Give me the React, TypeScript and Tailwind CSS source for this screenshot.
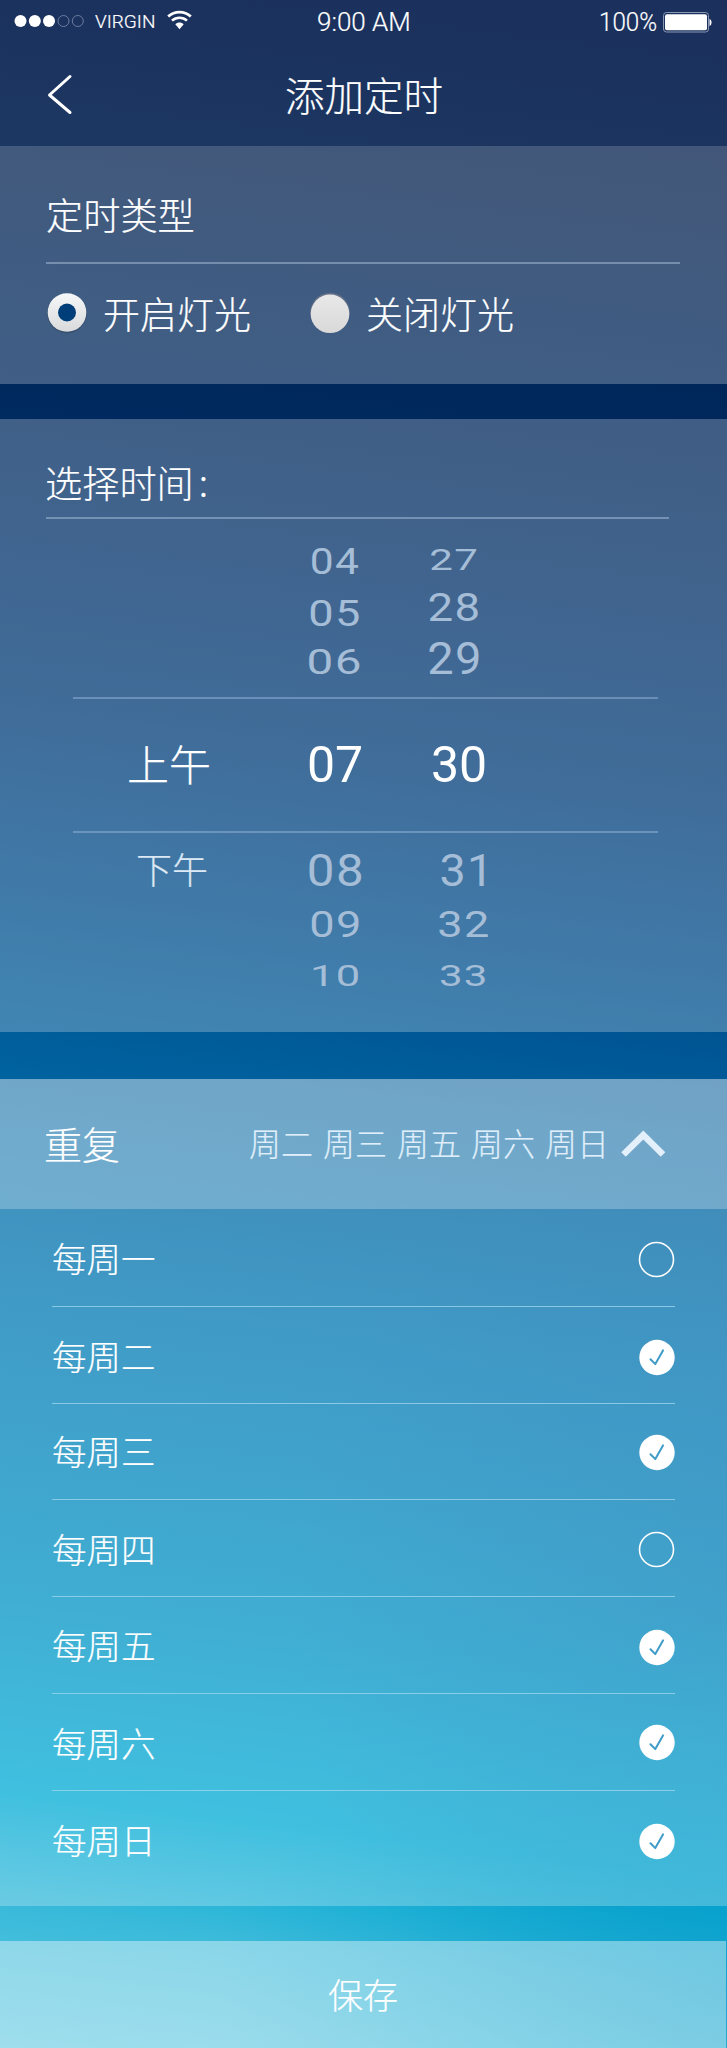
import React, { useState } from "react";

const cjk =
  "font-['Noto_Sans_CJK_SC',sans-serif] font-light whitespace-nowrap [-webkit-text-stroke:0.2px_currentColor]";
const latin = "font-[Roboto,sans-serif] whitespace-nowrap";

type Cell = { text: string; box: string; type: string };

const hoursBefore: Cell[] = [
  { text: "04", box: "h-[52px]", type: "text-[37px] scale-x-[1.15]" },
  { text: "05", box: "h-[52px]", type: "text-[37px] scale-x-[1.22]" },
  { text: "06", box: "h-[46px]", type: "text-[35px] scale-x-[1.36]" },
];
const minutesBefore: Cell[] = [
  { text: "27", box: "h-[44px]", type: "text-[29px] scale-x-[1.45]" },
  { text: "28", box: "h-[51px]", type: "text-[38px] scale-x-[1.2]" },
  { text: "29", box: "h-[52px]", type: "text-[44px] scale-x-[1.07]" },
];
const hoursAfter: Cell[] = [
  { text: "08", box: "h-[54px]", type: "text-[44px] scale-x-[1.12]" },
  { text: "09", box: "h-[53px]", type: "text-[37px] scale-x-[1.22]" },
  { text: "10", box: "h-[49px]", type: "text-[30px] scale-x-[1.45]" },
];
const minutesAfter: Cell[] = [
  { text: "31", box: "h-[54px] pl-[6px]", type: "text-[44px] scale-x-[1.06]" },
  { text: "32", box: "h-[53px]", type: "text-[37px] scale-x-[1.22]" },
  { text: "33", box: "h-[49px]", type: "text-[30px] scale-x-[1.4]" },
];

function Wheel({ cells, className }: { cells: Cell[]; className: string }) {
  return (
    <div className={`flex flex-col text-[#a5bdd6] ${className}`}>
      {cells.map((c) => (
        <div key={c.text} className={`flex items-center justify-center ${c.box}`}>
          <span className={`${latin} -mr-[0.03em] tracking-[0.03em] leading-none ${c.type}`}>{c.text}</span>
        </div>
      ))}
    </div>
  );
}

function StatusBar() {
  return (
    <div className="flex h-[44px] items-start">
      <svg className="mt-[14px] ml-[14px] h-[14px] w-[72px]" viewBox="0 0 72 14">
        <circle cx="6.5" cy="7" r="6" fill="#fff" />
        <circle cx="20.8" cy="7" r="6" fill="#fff" />
        <circle cx="35" cy="7" r="6" fill="#fff" />
        <circle cx="49.5" cy="7" r="5.5" fill="none" stroke="#7483a3" strokeWidth="0.9" />
        <circle cx="63.8" cy="7" r="5.5" fill="none" stroke="#7483a3" strokeWidth="0.9" />
      </svg>
      <div className="mt-[12px] ml-[9px] w-[72px]">
        <span className={`${latin} block origin-left text-[19px] leading-[20px] font-light [-webkit-text-stroke:0.2px_currentColor]`}>VIRGIN</span>
      </div>
      <svg className="mt-[10px] h-[20px] w-[25px]" viewBox="0 0 25 20" fill="none" stroke="#fff">
        <path d="M1.2 6.6C7.6.5 17.4.5 23.8 6.6" strokeWidth="2.8" />
        <path d="M5 10.7c4.300-4 10.700-4 15 0" strokeWidth="2.500" />
        <path d="M8.300 14.300C10.500 11.900 14.500 11.900 16.700 14.300L12.500 19.300Z" fill="#fff" stroke="none" />
      </svg>
      <div className="mt-[8px] ml-[125px] w-[282px]">
        <span className={`${latin} block origin-left text-[26px] font-light leading-[28px] [-webkit-text-stroke:0.2px_currentColor]`}>9:00 AM</span>
      </div>
      <div className="mt-[8px] w-[64px]">
        <span className={`${latin} block origin-left scale-x-[0.93] text-[26px] font-light leading-[28px] [-webkit-text-stroke:0.2px_currentColor]`}>100%</span>
      </div>
      <svg className="mt-[12px] h-[21px] w-[50px]" viewBox="0 0 50 21">
        <rect x="0.5" y="0.5" width="45" height="19.500" rx="3" fill="none" stroke="#8b98b3" />
        <rect x="2" y="2.200" width="42" height="16" rx="2" fill="#fff" />
        <path d="M46.500 7c2.700.8 2.700 6.200 0 7z" fill="#fff" />
      </svg>
    </div>
  );
}

function RadioMark({ on }: { on: boolean }) {
  return (
    <svg className="h-[42px] w-[42px]" viewBox="0 0 42 42">
      <defs>
        <linearGradient id="knobOn" x1="0" y1="0" x2="0" y2="1">
          <stop offset="0" stopColor="#f6f7f8" />
          <stop offset="1" stopColor="#d9dadb" />
        </linearGradient>
        <linearGradient id="knobOff" x1="0" y1="0" x2="0" y2="1">
          <stop offset="0" stopColor="#e9e8e9" />
          <stop offset="1" stopColor="#d9d9d9" />
        </linearGradient>
      </defs>
      <circle cx="21" cy={on ? 21.500 : 20.500} r="19.800" fill={on ? "#30465f" : "#7b7f8c"} opacity="0.6" />
      <circle cx="21" cy={on ? 20.500 : 21.800} r="19.300" fill={on ? "url(#knobOn)" : "url(#knobOff)"} />
      {on && <circle cx="21" cy="20.500" r="9" fill="#003e79" />}
    </svg>
  );
}

type Day = { name: string; row: string; text: string; mark: string };

const days: Day[] = [
  { name: "每周一", row: "h-[98px]", text: "mt-[22px]", mark: "mt-[32px]" },
  { name: "每周二", row: "h-[97px]", text: "mt-[22px]", mark: "mt-[32px]" },
  { name: "每周三", row: "h-[96px]", text: "mt-[20px]", mark: "mt-[30px]" },
  { name: "每周四", row: "h-[97px]", text: "mt-[22px]", mark: "mt-[31px]" },
  { name: "每周五", row: "h-[97px]", text: "mt-[21px]", mark: "mt-[32px]" },
  { name: "每周六", row: "h-[97px]", text: "mt-[22px]", mark: "mt-[30px]" },
  { name: "每周日", row: "h-[115px]", text: "mt-[22px]", mark: "mt-[32px]" },
];

function DayMark({ on }: { on: boolean }) {
  return (
    <svg className="h-[37px] w-[37px]" viewBox="0 0 37 37" fill="none">
      {on ? (
        <>
          <circle cx="19" cy="18.500" r="17.700" fill="#fff" />
          <path d="M12.500 20.200l4.800 4.900 7.700-13.700" stroke="#3f9bc8" strokeWidth="2" strokeLinecap="round" strokeLinejoin="round" />
        </>
      ) : (
        <circle cx="18.500" cy="18.500" r="17" stroke="#fff" strokeWidth="1.600" />
      )}
    </svg>
  );
}

export default function App() {
  const [lightOn, setLightOn] = useState(true);
  const [picked, setPicked] = useState([false, true, true, false, true, true, true]);
  const toggle = (i: number) => setPicked(picked.map((p, n) => (n === i ? !p : p)));

  return (
    <main className="flex h-[2048px] w-[727px] flex-col overflow-hidden bg-[radial-gradient(ellipse_70%_18%_at_100%_97%,rgba(0,155,200,0.55),rgba(0,155,200,0)),radial-gradient(ellipse_60%_26%_at_100%_78%,rgba(0,95,165,0.22),rgba(0,95,165,0)),linear-gradient(187deg,#02194b_0%,#021a4c_4.2%,#03214f_9%,#00285c_20%,#002a5f_23%,#003b77_37%,#004f8d_46.3%,#005e9b_52.5%,#0079b3_65%,#0093c4_79%,#00abd5_88%,#3abada_93.4%,#5fc8e1_100%)] text-white">
      <header className="h-[146px] shrink-0 bg-white/10">
        <StatusBar />
        <div className="flex h-[100px] items-start">
          <button className="mt-[30px] ml-[46px] h-[42px] w-[28px]" aria-label="返回">
            <svg viewBox="0 0 28 42" className="h-[42px] w-[28px]" fill="none">
              <path d="M24 2.500L3.500 21 24 38.500" stroke="#fff" strokeWidth="3" strokeLinecap="round" strokeLinejoin="round" />
            </svg>
          </button>
          <h1 className={`${cjk} mt-[21px] ml-[211px] text-[39.500px] leading-[58px]`}>添加定时</h1>
        </div>
      </header>

      <section className="h-[238px] shrink-0 bg-white/25 pl-[46px]">
        <h2 className={`${cjk} h-[116px] pt-[40px] text-[37.200px] leading-[56px]`}>定时类型</h2>
        <div className="h-[2px] w-[634px] bg-[#9bb0cc]/60" />
        <div className="flex pt-[28px]">
          <button className="flex w-[263px] items-start" onClick={() => setLightOn(true)}>
            <RadioMark on={lightOn} />
            <span className={`${cjk} -mt-[7px] ml-[15px] text-[37px] leading-[56px]`}>开启灯光</span>
          </button>
          <button className="flex items-start" onClick={() => setLightOn(false)}>
            <RadioMark on={!lightOn} />
            <span className={`${cjk} -mt-[7px] ml-[15px] text-[37px] leading-[56px]`}>关闭灯光</span>
          </button>
        </div>
      </section>

      <section className="mt-[35px] h-[613px] shrink-0 bg-white/25">
        <h2 className={`${cjk} flex h-[98px] pt-[35px] pl-[45px] text-[37.200px] leading-[56px]`}>
          选择时间<span className="-mt-[1px] ml-[5px]">:</span>
        </h2>
        <div className="ml-[46px] h-[2px] w-[623px] bg-[#a0b8d6]/55" />
        <div className="flex h-[178px] items-start">
          <Wheel cells={hoursBefore} className="mt-[16px] ml-[284px] w-[100px]" />
          <Wheel cells={minutesBefore} className="mt-[19px] ml-[20px] w-[100px]" />
        </div>
        <div className="ml-[73px] h-[2px] w-[585px] bg-[#a0bde0]/45" />
        <div className="flex h-[132px] items-center">
          <span className={`${cjk} -mt-[5px] ml-[127px] w-[158px] text-[42px] leading-[60px]`}>上午</span>
          <span className={`${latin} flex w-[100px] justify-center text-[50px] leading-[60px]`}>07</span>
          <span className={`${latin} ml-[24px] flex w-[100px] justify-center text-[50px] leading-[60px]`}>30</span>
        </div>
        <div className="ml-[73px] h-[2px] w-[585px] bg-[#a0bde0]/45" />
        <div className="flex h-[199px] items-start">
          <span className={`${cjk} mt-[8px] ml-[136px] w-[149px] text-[36px] leading-[54px] text-[#dce8f3]`}>下午</span>
          <Wheel cells={hoursAfter} className="mt-[11px] w-[100px]" />
          <Wheel cells={minutesAfter} className="mt-[11px] ml-[28px] w-[100px]" />
        </div>
      </section>

      <section className="mt-[47px] h-[827px] shrink-0 bg-white/25">
        <div className="flex h-[130px] items-start bg-white/25">
          <h2 className={`${cjk} mt-[36px] ml-[44px] w-[205px] text-[38px] leading-[56px]`}>重复</h2>
          <div className={`${cjk} mt-[39px] flex w-[370px] text-[32px] leading-[48px] text-[#dfeefa]`}>
            {["周二", "周三", "周五", "周六", "周日"].map((d) => (
              <span key={d} className="w-[74px]">{d}</span>
            ))}
          </div>
          <svg className="mt-[50px] h-[30px] w-[48px]" viewBox="0 0 48 30" fill="none">
            <path d="M4.500 25.500L24.300 6 44 25.500" stroke="#e3effa" strokeWidth="6.500" />
          </svg>
        </div>
        <ul>
          {days.map((d, i) => (
            <li
              key={d.name}
              onClick={() => toggle(i)}
              className={`ml-[52px] flex w-[623px] items-start justify-between ${d.row} ${i < 6 ? "border-b border-[#9bd5ee]/80" : ""}`}
            >
              <span className={`${cjk} text-[34.500px] leading-[52px] ${d.text}`}>{d.name}</span>
              <span className={d.mark}>
                <DayMark on={picked[i]} />
              </span>
            </li>
          ))}
        </ul>
      </section>

      <button className={`${cjk} mt-[35px] flex h-[107px] w-[726px] shrink-0 justify-center bg-white/40 pt-[27px] text-[35px] leading-[52px]`}>
        保存
      </button>
    </main>
  );
}
